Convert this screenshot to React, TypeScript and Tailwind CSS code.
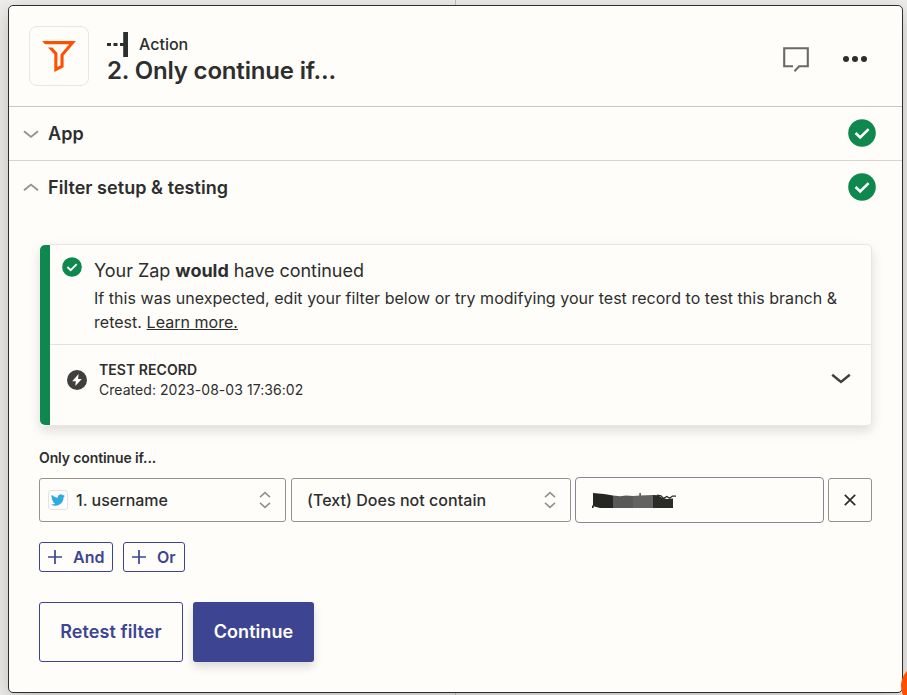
import type { ReactNode } from "react";

function CheckCircle({ size }: { size: number }) {
  return (
    <svg width={size} height={size} viewBox="0 0 28 28" className="block shrink-0">
      <circle cx="14" cy="14" r="13.8" fill="#0f884e" />
      <path d="M7.6 14l4.6 4.5 8.4-8.4" fill="none" stroke="#fff" strokeWidth="2.6" />
    </svg>
  );
}

function Section({ title, open }: { title: string; open?: boolean }) {
  return (
    <div className="flex h-[53px] items-center pl-[14px] pr-[26.5px]">
      <svg width="16" height="10" viewBox="0 0 16 10" className="mt-px block">
        <path
          d={open ? "M1 7.2L8 1.6l7 5.6" : "M1 2.3l7 5.6 7-5.6"}
          fill="none"
          stroke="#95928e"
          strokeWidth="1.9"
        />
      </svg>
      <h2 className="ml-[9px] flex-1 whitespace-nowrap text-[18px] font-semibold leading-6 tracking-[0.05px]">{title}</h2>
      <div className="-mt-px">
        <CheckCircle size={28} />
      </div>
    </div>
  );
}

function Sorter() {
  return (
    <svg width="12" height="18" viewBox="0 0 12 18" className="block shrink-0">
      <path d="M1 6.2l5-4.6 5 4.6M1 11.8l5 4.6 5-4.6" fill="none" stroke="#95928e" strokeWidth="1.6" />
    </svg>
  );
}

function AddButton({ children, className }: { children: ReactNode; className: string }) {
  return (
    <button
      className={`flex h-[30px] items-center rounded-[3px] border border-[#3d4592] pl-2 text-[16px] font-semibold text-[#3d4592] ${className}`}
    >
      <svg width="14" height="14" viewBox="0 0 14 14" className="mr-[11px] block">
        <path d="M0 7h14M7 0v14" stroke="#3d4592" strokeWidth="1.7" />
      </svg>
      {children}
    </button>
  );
}

export default function App() {
  return (
    <div className="relative h-[695px] w-[907px] overflow-hidden bg-[#f0eeec] pl-2 pt-[5px] font-['Inter',sans-serif] text-[#2d2e2e]">
      <div className="absolute left-[455px] top-0 h-full w-px bg-[#c4c2be]" />
      <main className="relative h-[688px] w-[895px] rounded-[5px] border border-[#2d2e2e] bg-[#fffdf9] shadow-[0_6px_22px_0_rgba(0,0,0,0.22)]">
        <header className="flex h-[101px] items-center border-b border-[#c9c8c5] pl-5 pr-[34px]">
          <div className="flex h-[60px] w-[60px] items-center justify-center rounded-[8px] border border-[#e8e7e4]">
            <svg width="36" height="34" viewBox="0 0 36 34" className="block">
              <path
                d="M1.2 2H34.9L22.6 16.6V28.2L13.3 32.9V15.3L7 8.4H11.4L16.4 14.1V28L19.5 26.3V15.4L28.2 5.2H4z"
                fill="#ff4f00"
              />
            </svg>
          </div>
          <div className="ml-[18px] flex-1 pt-[5px]">
            <div className="flex h-6 items-center">
              <svg width="22" height="25" viewBox="0 0 22 25" className="block">
                <path d="M0 11h4v3H0zM6.5 11h4v3h-4zM13 11h4v3h-4zM16.2 0h4.8v25h-4.8z" fill="#2d2e2e" />
              </svg>
              <span className="ml-[10px] text-[16px] font-medium leading-6">Action</span>
            </div>
            <h1 className="whitespace-nowrap text-[24px] font-semibold leading-[29px] tracking-[-0.17px]">
              2. Only continue if...
            </h1>
          </div>
          <svg width="28" height="28" viewBox="0 0 28 28" className="mt-[7px] block">
            <path d="M11 20.3H2.2V2.2h23.6v18.1h-8.6l-4.8 4.9" fill="none" stroke="#6b6966" strokeWidth="2.1" />
          </svg>
          <svg width="26" height="8" viewBox="0 0 26 8" className="ml-8 mt-[6px] block">
            <circle cx="4" cy="4" r="3" fill="#2d2e2e" />
            <circle cx="13" cy="4" r="3" fill="#2d2e2e" />
            <circle cx="22" cy="4" r="3" fill="#2d2e2e" />
          </svg>
        </header>
        <Section title="App" />
        <div className="h-px bg-[#d7d5d2]" />
        <Section title="Filter setup & testing" open />

        <div className="pl-[30px] pt-[30px]">
          <section className="ml-px flex h-[182px] w-[832px] rounded-[5px] bg-[#fffdf9] shadow-[0_5px_12px_0_rgba(0,0,0,0.13)]">
            <div className="my-px w-[10px] rounded-l-[5px] bg-[#0f884e]" />
            <div className="flex-1 rounded-r-[5px] border border-l-0 border-[#e8e7e4]">
              <div className="flex h-[100px] border-b border-[#e4e3e1] pl-3 pt-3">
                <CheckCircle size={20} />
                <div className="ml-3">
                  <p className="mt-[2px] text-[18px] leading-6 tracking-[-0.03px]">
                    Your Zap <b className="font-bold">would</b> have continued
                  </p>
                  <p className="mt-[3px] whitespace-nowrap text-[16px] leading-6 tracking-[0.033px]">
                    If this was unexpected, edit your filter below or try modifying your test record to test this branch &amp;
                    <br />
                    retest. <a className="underline">Learn more.</a>
                  </p>
                </div>
              </div>
              <div className="flex pl-[17px] pt-[15px]">
                <svg width="20" height="20" viewBox="0 0 20 20" className="mt-[10px] block">
                  <circle cx="10" cy="10" r="10" fill="#413f3d" />
                  <path d="M11.6 4L5.2 11.2h3.6L8.3 16l6.5-7.1h-3.7z" fill="#fff" />
                </svg>
                <div className="ml-3 flex-1 text-[14px] leading-5 tracking-[0.05px]">
                  <p className="font-semibold">TEST RECORD</p>
                  <p>Created: 2023-08-03 17:36:02</p>
                </div>
                <svg width="20" height="12" viewBox="0 0 20 12" className="mr-5 mt-[13px] block">
                  <path d="M1.2 1.8L10 9l8.8-7.2" fill="none" stroke="#413f3d" strokeWidth="2.4" />
                </svg>
              </div>
            </div>
          </section>

          <p className="mt-[22px] text-[14px] font-semibold leading-5 tracking-[-0.12px]">Only continue if...</p>

          <div className="mt-[9px] flex h-[46px] items-center text-[16px] font-medium">
            <div className="flex h-11 w-[247px] items-center rounded-[3px] border border-[#95928e] pl-2 pr-[14px]">
              <span className="flex h-5 w-5 items-center justify-center rounded-[3px] border border-[#e4e3e1]">
                <svg width="14" height="14" viewBox="0 0 24 24" className="block">
                  <path
                    fill="#2daae1"
                    d="M23.95 4.57a10 10 0 0 1-2.82.77 4.96 4.96 0 0 0 2.16-2.72c-.95.55-2 .95-3.13 1.18a4.92 4.92 0 0 0-8.38 4.48C7.69 8.1 4.07 6.13 1.64 3.16a4.93 4.93 0 0 0 1.52 6.57 4.9 4.9 0 0 1-2.23-.61v.06a4.92 4.92 0 0 0 3.95 4.83 5 5 0 0 1-2.21.08 4.94 4.94 0 0 0 4.6 3.42A9.87 9.87 0 0 1 0 19.54a13.99 13.99 0 0 0 7.55 2.21c9.05 0 14-7.5 14-13.98 0-.21 0-.42-.02-.63a9.94 9.94 0 0 0 2.46-2.55z"
                  />
                </svg>
              </span>
              <span className="ml-2 flex-1">1. username</span>
              <Sorter />
            </div>
            <div className="ml-[5px] flex h-11 w-[280px] items-center rounded-[3px] border border-[#95928e] pl-[15px] pr-[14px]">
              <span className="flex-1 tracking-[0.04px]">(Text) Does not contain</span>
              <Sorter />
            </div>
            <div className="ml-1 flex h-[46px] w-[249px] items-center rounded-[4px] border border-[#88859a] pl-4">
              <svg width="86" height="18" viewBox="0 0 86 18" className="block">
                <path d="M1 2L12 3 21 4.6V17H8L1.6 15.2V17H0V14.4H1z" fill="#252523" />
                <path d="M21 4.6L28 5.2 34 4.6 41 5V17H21z" fill="#595957" />
                <path d="M41 5L48 4.6 61 4V17H41z" fill="#636361" />
                <path d="M47.4 2h1.4v3h-1.4z" fill="#444442" />
                <path d="M61 4l5 .2 4 2.6 5 1.2 6-.5V17H61z" fill="#2b2b29" />
                <path d="M65 4.2l4 .6 2.6 2.6 3.2-2 3 1.9 2.6-2.2 3.6 0" fill="none" stroke="#2b2b29" strokeWidth="1.3" />
              </svg>
            </div>
            <button className="ml-1 flex h-11 w-11 items-center justify-center rounded-[3px] border border-[#95928e]">
              <svg width="12" height="12" viewBox="0 0 12 12" className="block">
                <path d="M.8.8l10.4 10.4M11.2.8L.8 11.2" stroke="#2d2e2e" strokeWidth="1.7" />
              </svg>
            </button>
          </div>

          <div className="mt-[19px] flex gap-[10px]">
            <AddButton className="w-[74px]">And</AddButton>
            <AddButton className="w-[62px]">Or</AddButton>
          </div>

          <div className="mt-[30px] flex gap-[10px] text-[18px] font-semibold">
            <button className="h-[60px] w-[144px] rounded-[3px] border border-[#3d4592] pb-[2px] tracking-[0.08px] text-[#3d4592]">
              Retest filter
            </button>
            <button className="h-[60px] w-[121px] rounded-[3px] bg-[#3d4592] pb-[2px] tracking-[0.05px] text-[#fffdf9] shadow-[0_5px_10px_0_rgba(0,0,0,0.14)]">
              Continue
            </button>
          </div>
        </div>
      </main>
      <div className="absolute left-[901px] top-[664px] h-[44px] w-[44px] rounded-full bg-[#ff4f00]" />
    </div>
  );
}
